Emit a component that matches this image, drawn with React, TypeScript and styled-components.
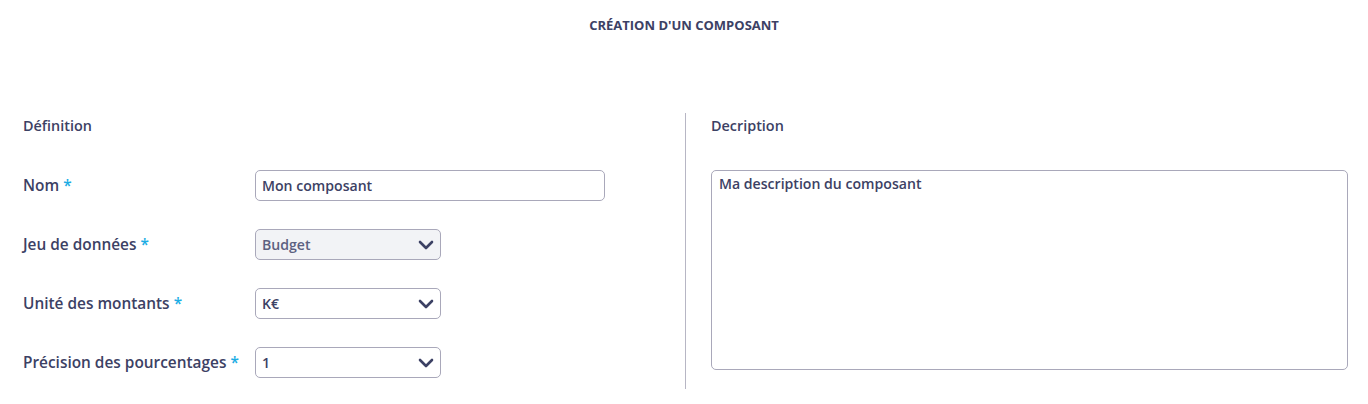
import React from 'react';
import styled, { createGlobalStyle } from 'styled-components';

const GlobalStyle = createGlobalStyle`
  body {
    margin: 0;
    background: #ffffff;
    font-family: "Open Sans", Lato, sans-serif;
    color: #3c4164;
  }
`;

const Page = styled.div`
  width: 1368px;
  height: 404px;
  box-sizing: border-box;
  overflow: hidden;
`;

const Title = styled.h1`
  margin: 0;
  padding-top: 17px;
  height: 113px;
  box-sizing: border-box;
  text-align: center;
  font-size: 13px;
  line-height: 16px;
  font-weight: 700;
  color: #3c4164;
`;

const Columns = styled.div`
  display: flex;
`;

const LeftColumn = styled.section`
  flex: 0 0 685px;
  box-sizing: border-box;
  padding-left: 23px;
`;

const Divider = styled.div`
  flex: 0 0 1px;
  height: 276px;
  background: #b7b6c4;
`;

const RightColumn = styled.section`
  flex: 1;
  padding: 0 20px 0 25px;
`;

const SectionTitle = styled.h2`
  margin: 0;
  padding-top: 5px;
  height: 57px;
  box-sizing: border-box;
  font-size: 14.4px;
  line-height: 16px;
  font-weight: 600;
  color: #3c4164;
`;

const Fields = styled.div`
  display: flex;
  flex-direction: column;
  gap: 28px;
`;

const Row = styled.div`
  display: flex;
  align-items: center;
  height: 31px;
`;

const Label = styled.label`
  flex: 0 0 232px;
  font-size: 15.4px;
  font-weight: 600;
  color: #3c4164;
`;

const Star = styled.span`
  color: #1cade4;
  margin-left: 4px;
`;

const Field = styled.div<{ $width: number; $disabled?: boolean }>`
  width: ${p => p.$width}px;
  height: 31px;
  box-sizing: border-box;
  border: 1px solid #a9a8ba;
  border-radius: 5px;
  background: ${p => (p.$disabled ? '#f2f3f6' : '#ffffff')};
  display: flex;
  align-items: center;
  justify-content: space-between;
  padding: 0 6px 0 6px;
  font-size: 14.1px;
  font-weight: 600;
  color: ${p => (p.$disabled ? '#5d6181' : '#3c4164')};
`;

const TextArea = styled.div`
  height: 200px;
  box-sizing: border-box;
  border: 1px solid #a9a8ba;
  border-radius: 5px;
  padding: 5px 7px;
  font-size: 14.1px;
  font-weight: 600;
  line-height: 16px;
  color: #3c4164;
`;

const Chevron = () => (
  <svg width="16" height="10" viewBox="0 0 16 10" fill="none">
    <path d="M2 2l6 6 6-6" stroke="#3c4164" strokeWidth="2.6" strokeLinecap="round" strokeLinejoin="round" />
  </svg>
);

const fields = [
  { label: 'Nom', value: 'Mon composant', width: 350, select: false },
  { label: 'Jeu de données', value: 'Budget', width: 186, select: true, disabled: true },
  { label: 'Unité des montants', value: 'K€', width: 186, select: true },
  { label: 'Précision des pourcentages', value: '1', width: 186, select: true },
];

const App = () => (
  <Page>
    <GlobalStyle />
    <Title>CRÉATION D'UN COMPOSANT</Title>
    <Columns>
      <LeftColumn>
        <SectionTitle>Définition</SectionTitle>
        <Fields>
          {fields.map(f => (
            <Row key={f.label}>
              <Label>
                {f.label}
                <Star>*</Star>
              </Label>
              <Field $width={f.width} $disabled={f.disabled}>
                <span>{f.value}</span>
                {f.select && <Chevron />}
              </Field>
            </Row>
          ))}
        </Fields>
      </LeftColumn>
      <Divider />
      <RightColumn>
        <SectionTitle>Decription</SectionTitle>
        <TextArea>Ma description du composant</TextArea>
      </RightColumn>
    </Columns>
  </Page>
);

export default App;
